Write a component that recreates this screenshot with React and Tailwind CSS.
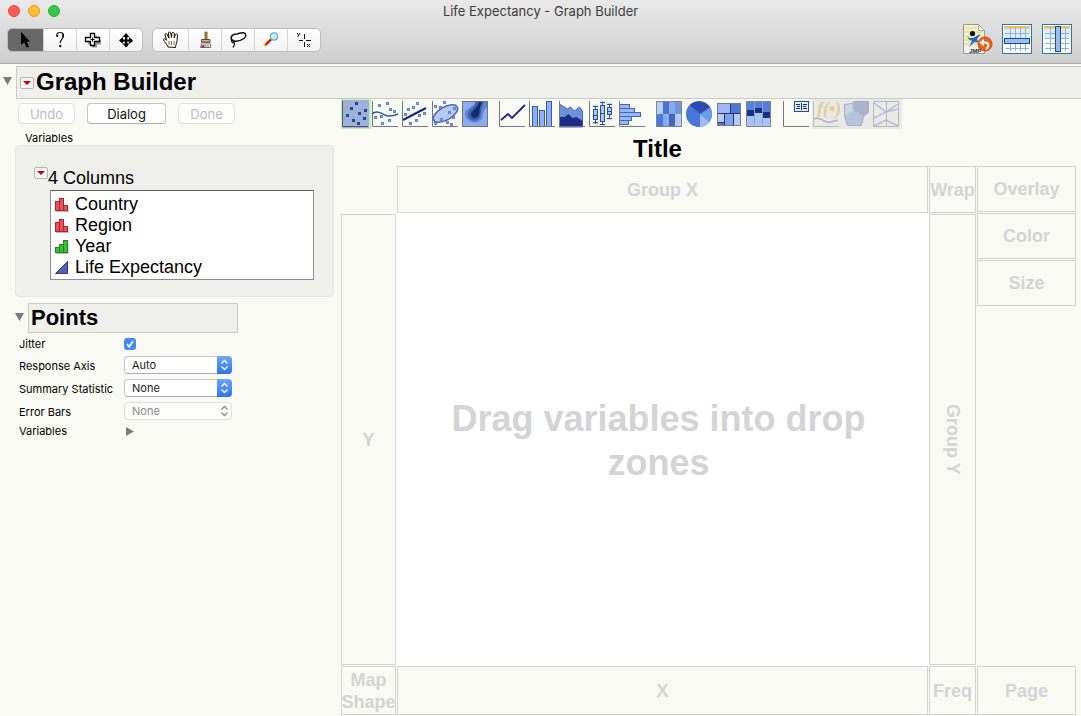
import React from 'react';

const Svg = ({ w = 28, h = 28, children, ...rest }) => (
  <svg width={w} height={h} viewBox={`0 0 ${w} ${h}`} fill="none" aria-hidden="true" className="block shrink-0" {...rest}>
    {children}
  </svg>
);

/* ---------- Window toolbar icons ---------- */

const ArrowIcon = () => (
  <Svg w={20} h={20}>
    <path d="M5 2v13l3.200-2.800 2.200 5h2.600l-2.200-5.600H14z" fill="#000" />
  </Svg>
);
const HelpIcon = () => (
  <Svg w={20} h={20}>
    <path d="M7 6.500c-.8-3 1-4 3-4s3.800 1 3.500 3.500c-.3 2.500-3.300 3.500-3.300 7" stroke="#111" strokeWidth="1.200" />
    <path d="M12.800 3.500v4" stroke="#111" strokeWidth="1.200" />
    <circle cx="7.400" cy="6" r="1" fill="#111" />
    <circle cx="10.200" cy="16" r="1.200" fill="#111" />
  </Svg>
);
const PlusIcon = () => (
  <Svg w={20} h={20}>
    <path d="M9 5.500h5v4h4v5h-4v3h-5v-3h-4v-5h4z" fill="#999" />
    <path d="M7.500 3.500h4v4h5v4h-5v4h-4v-4h-5v-4h5z" fill="#fff" stroke="#000" strokeWidth="1.300" />
    <path d="M7.500 9.500h4M9.500 7.500v4" stroke="#000" />
  </Svg>
);
const MoveIcon = () => (
  <Svg w={20} h={20}>
    <path d="M11 6v11M5 11.500h12" stroke="#aaa" strokeWidth="2" />
    <path d="M10 5v11M4 10.500h12" stroke="#000" strokeWidth="2" />
    <path d="M10 3l3.500 4h-7zM10 17.500l3.500-4h-7zM3 10.500l4-3.500v7zM17 10.500l-4-3.500v7z" fill="#000" />
  </Svg>
);
const HandIcon = () => (
  <Svg w={20} h={20}>
    <path
      d="M7 17c-1-3-4-5-4.500-7.500.5-1.300 2-.8 3 .8L4 4.500c.3-1.300 1.700-1.200 2.200 0L8 8 7.300 3c.4-1.300 2-1.200 2.400 0l.8 4.500.4-4.500c.6-1.100 2-.9 2.300.3l.1 4.700 1-3.500c.8-1 2-.6 2.200.6L16 11c-.2 2.500-1.500 3.500-1.500 6.500z"
      fill="#fffef0"
      stroke="#111"
    />
    <path d="M8 11v4M10.500 11v4M13 11v4" stroke="#777" />
  </Svg>
);
const BrushIcon = () => (
  <Svg w={20} h={20}>
    <path d="M10 2h2v8h-2z" fill="#c98a4a" stroke="#6b4a2a" strokeWidth=".8" />
    <path d="M6.500 9.500h8.500v2.500H6.500z" fill="#e9b274" stroke="#333" strokeWidth=".8" />
    <path d="M7 12.500h8l.8 5H5.500z" fill="#eee" stroke="#555" strokeWidth=".8" />
    <path d="M9 13v4M11 13v4M13 13v4" stroke="#888" />
    <path d="M6 17.500l1.500-3 1.500 1.500 1 1.500z" fill="#c8102e" />
  </Svg>
);
const LassoIcon = () => (
  <Svg w={20} h={20}>
    <path d="M5 11C1 8 4 4 8.500 4c3-.3 4-1.500 7-1.200 3 .5 3 4 .5 5.700-3 2-7 3.300-10.500 2.500z" stroke="#111" strokeWidth="1.500" />
    <path d="M3.500 10.500c1.500-1 3.500.3 2.500 1.800-1 1-2.500 0-2.500-1.800zM5.500 12.500c2 1 .5 3-.5 5" stroke="#111" strokeWidth="1.200" />
  </Svg>
);
const MagnifierIcon = () => (
  <Svg w={20} h={20}>
    <path d="M9.500 9.500l-6.500 6.500" stroke="#f2cf30" strokeWidth="3" />
    <path d="M10 9.500l-5.500 5.500" stroke="#d01020" strokeWidth="2.200" />
    <circle cx="13" cy="6.500" r="3.800" fill="#a9f2fb" stroke="#5b93a8" />
    <path d="M11 6.500l2-2" stroke="#fff" />
  </Svg>
);
const CrosshairIcon = () => (
  <Svg w={20} h={20}>
    <path d="M10.500 4v5M10.500 12v5M5 10.500h4M12 10.500h5" stroke="#111" />
    <path d="M3 3l1.500 2M6 3L3.500 7M13 14l3 3M16 14l-3 3" stroke="#111" />
  </Svg>
);

const JmpIcon = () => (
  <Svg w={32} h={32}>
    <path d="M2.500 1.500h15l6 6v23h-21z" fill="#f6f3c8" stroke="#999" />
    <path d="M17.500 1.500v6h6z" fill="#fff" stroke="#aaa" />
    <path d="M3 5h13M3 9h19M3 13h19M3 17h19M3 21h19" stroke="#d8d48e" />
    <path d="M3 23h20v7H3z" fill="#eee" />
    <circle cx="11.500" cy="10.500" r="2.600" fill="#111" />
    <path d="M6 14c4 1.500 6 1 8 0l5.500-3.500-3.500 6 1.500 3-4-.5-5.500 5L11 18c-2-1-4-2-5-4z" fill="#2468c2" />
    <text x="8" y="30" fontFamily="Liberation Sans, sans-serif" fontSize="6" fontWeight="700" fontStyle="italic" fill="#333">JMP</text>
    <circle cx="24" cy="21" r="7" fill="#e8641c" stroke="#c9500f" />
    <path d="M25 26c3.500-2 3-6.500-1-6.500h-2" stroke="#fff" strokeWidth="2" />
    <path d="M18.500 19.500l4.500-3.800v7.500z" fill="#fff" />
  </Svg>
);
const SheetIcon = ({ column }) => (
  <Svg w={30} h={30}>
    <rect x=".5" y=".5" width="29" height="29" fill="#fff" stroke="#2579b5" />
    <path d="M2 4h26v10H2z" fill="#d9efff" />
    <path d="M2 2h26v2.500H2z" fill="#f8bd4c" />
    <path d="M3 9.500h24M3 14.500h24M3 19.500h24M3 24.500h24M8.500 3v24M13.500 3v24M18.500 3v24M23.500 3v24" stroke="#8fb3d6" />
    {column ? (
      <rect x="13.500" y="2.500" width="5" height="25" fill="#9dbde4" stroke="#1848a0" />
    ) : (
      <rect x="2.500" y="14.500" width="25" height="5" fill="#9dbde4" stroke="#1848a0" />
    )}
  </Svg>
);

/* ---------- Graph element icons ---------- */

const Axes = ({ c = '#777' }) => <path d="M1.500 1v25.500H27" stroke={c} />;
const Dots = ({ pts, fill = '#8faae6', stroke = '#6283cc' }) =>
  pts.map(([x, y]) => <rect key={`${x}-${y}`} x={x + 0.5} y={y + 0.5} width="2" height="2" fill={fill} stroke={stroke} />);

const PointsIcon = () => (
  <Svg>
    <rect x="1" y="0" width="27" height="28" fill="#9fb1d6" />
    <Axes c="#555" />
    <Dots pts={[[14, 2], [9, 7], [23, 9], [17, 12], [5, 14], [22, 17], [11, 19], [16, 22]]} fill="#2453c4" stroke="#1d469f" />
  </Svg>
);
const SmootherIcon = () => (
  <Svg>
    <Axes />
    <Dots pts={[[7, 4], [15, 2], [18, 8], [22, 10], [3, 16], [9, 15], [17, 19], [10, 22]]} />
    <path d="M1 14c4-4 9-1 13 1s8 1 13-1" stroke="#3553a8" strokeWidth="1.400" />
  </Svg>
);
const FitIcon = () => (
  <Svg>
    <Axes />
    <Dots pts={[[15, 2], [6, 8], [11, 6], [3, 13], [17, 14], [22, 12], [14, 19], [8, 22]]} />
    <path d="M2 20L25 8" stroke="#17218f" strokeWidth="2" />
  </Svg>
);
const EllipseIcon = () => (
  <Svg>
    <Axes />
    <Dots pts={[[12, 1], [3, 5], [8, 6], [21, 16], [15, 21], [19, 23], [3, 22]]} />
    <ellipse cx="14.500" cy="13.500" rx="13.500" ry="6.500" transform="rotate(-30 14.500 13.500)" fill="#a9bbee" fillOpacity=".8" stroke="#4a66cf" strokeWidth="1.500" />
    <Dots pts={[[17, 11], [22, 7], [9, 18]]} />
  </Svg>
);
const ContourIcon = () => (
  <Svg>
    <rect x="1.500" y="1.500" width="25" height="25" fill="#8eabee" />
    <path d="M14 2c-1 5-10 6-10 12 1 9 12 11 17 5 2-6 0-8 5-12V2z" fill="#5f85d2" />
    <path d="M15 2c-1 6-8 7-8 13 0 6 9 8 12 2 2-6 0-8 4-15z" fill="#395fae" />
    <path d="M18 2c-2 8-8 8-8 13 1 4 6 4 8 0 1-5 0-7 3-13z" fill="#152c66" />
    <rect x="1.500" y="1.500" width="25" height="25" stroke="#6d7380" />
  </Svg>
);
const LineIcon = () => (
  <Svg>
    <Axes />
    <path d="M3 20l7-6 4 4L27 5" stroke="#1b2693" strokeWidth="1.800" />
  </Svg>
);
const BarsIcon = () => (
  <Svg>
    <g fill="#8eb0f7" stroke="#3358b5">
      <rect x="4.500" y="6.500" width="5" height="20" />
      <rect x="11.500" y="10.500" width="5" height="16" />
      <rect x="18.500" y="1.500" width="5" height="25" />
    </g>
    <Axes />
  </Svg>
);
const AreaIcon = () => (
  <Svg>
    <path d="M1.500 4l8 5 3-2 4 4 5-4 3 4v16h-23z" fill="#6c91db" stroke="#4668b8" />
    <path d="M1.500 17h5l4-3 4 4 4-1 6 4v5h-23z" fill="#1d2c84" />
    <Axes />
  </Svg>
);
const BoxPlotIcon = () => (
  <Svg>
    <path d="M5 5h5v2H5zM5 22h5v2H5zM12 1h5v2h-5zM12 24h5v2h-5zM19 3h5v2h-5zM19 18h5v2h-5z" fill="#ddd" stroke="#ddd" />
    <g stroke="#2b4f9f">
      <path d="M7.500 6v18M5 6.500h5M5 22.500h5M14.500 2v23M12 2.500h5M12 24.500h5M21.500 4v14M19 4.500h5M19 18.500h5" />
      <rect x="5.500" y="9.500" width="4" height="10" fill="#a9c6fb" />
      <rect x="12.500" y="5.500" width="4" height="16" fill="#a9c6fb" />
      <rect x="19.500" y="7.500" width="4" height="7" fill="#a9c6fb" />
      <path d="M5 15.500h5M12 13.500h5M19 11.500h5" />
    </g>
    <Axes />
  </Svg>
);
const HistogramIcon = () => (
  <Svg>
    <g fill="#9ab7f5" stroke="#4064bb">
      <rect x="1.500" y="4.500" width="10" height="4" />
      <rect x="1.500" y="8.500" width="15" height="4" />
      <rect x="1.500" y="12.500" width="21" height="4" />
      <rect x="1.500" y="16.500" width="12" height="4" />
      <rect x="1.500" y="20.500" width="9" height="4" />
    </g>
    <Axes />
  </Svg>
);
const HeatmapIcon = () => (
  <Svg>
    <path d="M2 2h6v12H2z" fill="#b7cdfa" /><path d="M8 2h6v12H8z" fill="#4673d6" />
    <path d="M14 2h6v12h-6z" fill="#8aa9ea" /><path d="M20 2h6v12h-6z" fill="#7396de" />
    <path d="M2 14h6v12H2z" fill="#4a78dc" /><path d="M8 14h6v12H8z" fill="#8aabef" />
    <path d="M14 14h6v12h-6z" fill="#4565ba" /><path d="M20 14h6v12h-6z" fill="#b5ccfc" />
    <rect x="1.500" y="1.500" width="25" height="25" stroke="#7e838d" />
  </Svg>
);
const PieIcon = () => (
  <Svg>
    <circle cx="14" cy="14" r="13" fill="#4876d8" />
    <path d="M15 14L5 5A13 13 0 0 1 25 7.500z" fill="#2d4ab0" />
    <path d="M15 14L25 7.500A13 13 0 0 1 24 22z" fill="#6b9be5" />
    <path d="M15 14l9 8a13 13 0 0 1-9 5z" fill="#9ebcfb" />
  </Svg>
);
const TreemapIcon = () => (
  <Svg>
    <rect x="2.500" y="3.500" width="23" height="22" fill="#303645" />
    <path d="M3 4h12v9H3z" fill="#9db8f4" /><path d="M16 4h9v9h-9z" fill="#4c78dc" />
    <path d="M3 14h6v8H3z" fill="#b5cbfb" /><path d="M3 23h6v2H3z" fill="#4c78dc" />
    <path d="M10 14h8v11h-8z" fill="#7da0fa" /><path d="M19 14h6v11h-6z" fill="#b5cbfb" />
    <rect x="2.500" y="3.500" width="23" height="22" stroke="#777c86" />
  </Svg>
);
const MosaicIcon = () => (
  <Svg>
    <path d="M2 2h7v24H2zM10 2h7v24h-7zM18 2h7v24h-7z" fill="#a9c4fb" />
    <path d="M2 2h7v8H2zM10 2h7v6h-7zM18 2h7v10h-7z" fill="#5681dc" />
    <path d="M2 10h7v6H2zM10 8h7v5h-7zM18 12h7v6h-7z" fill="#183185" />
    <path d="M9.500 2v24M17.500 2v24" stroke="#9aa0ac" />
    <rect x="1.500" y="1.500" width="24" height="25" stroke="#7e8490" />
  </Svg>
);
const CaptionIcon = () => (
  <Svg>
    <Axes />
    <rect x="12.500" y="1.500" width="14" height="10" fill="#e5efff" stroke="#2246bd" />
    <path d="M14 4.500h4M21 4.500h4M14 8.500h4M21 8.500h4M15 6.500h3M21 6.500h3M19.500 3v7" stroke="#1a286b" />
  </Svg>
);
const FormulaIcon = () => (
  <Svg>
    <Axes c="#bdbdbd" />
    <text x="5" y="15" fontFamily="Liberation Serif, serif" fontSize="18" fontStyle="italic" fontWeight="700" fill="#ddd09a">f(•)</text>
    <path d="M2 19c5-3 8 2 13 3 4 1 6-1 11-2" stroke="#a9b3d3" strokeWidth="1.400" />
  </Svg>
);
const MapIcon = () => (
  <Svg>
    <path d="M2.500 4.500l7-1 2-2h15v11l-5 4-2 9h-14l-3-9z" fill="#b8c3de" stroke="#a9afbd" />
    <path d="M3 5l7-1 1 7-8 5z" fill="#cbd4e8" />
    <path d="M12 2h14v10l-5 4-9-5z" fill="#a9b3cb" />
    <path d="M11.500 3v8l9 5M3 16l8-5" stroke="#bbc0cc" />
  </Svg>
);
const ParallelIcon = () => (
  <Svg>
    <path d="M2 3l12 9 12-8M2 18l12-6 12-3M2 26l12-6 12 6" stroke="#b2bddc" strokeWidth="1.500" />
    <path d="M1.500 1.500h25v25h-25zM14.500 2v24" stroke="#b9b9b9" />
  </Svg>
);

const elementGroups = [
  [['Points', PointsIcon], ['Smoother', SmootherIcon], ['Line of Fit', FitIcon], ['Ellipse', EllipseIcon], ['Contour', ContourIcon]],
  [['Line', LineIcon], ['Bar', BarsIcon], ['Area', AreaIcon], ['Box Plot', BoxPlotIcon], ['Histogram', HistogramIcon]],
  [['Heatmap', HeatmapIcon], ['Pie', PieIcon], ['Treemap', TreemapIcon], ['Mosaic', MosaicIcon]],
  [['Caption Box', CaptionIcon], ['Formula', FormulaIcon, true], ['Map Shapes', MapIcon, true], ['Parallel', ParallelIcon, true]],
];

/* ---------- Column type icons ---------- */

const NominalIcon = () => (
  <Svg w={15} h={15}>
    <path d="M2 14.500h13v-5" stroke="#bbb" />
    <g fill="#e0555c" stroke="#b5202b">
      <rect x="1.500" y="4.500" width="4" height="9" /><rect x="5.500" y="1.500" width="4" height="12" /><rect x="9.500" y="8.500" width="4" height="5" />
    </g>
  </Svg>
);
const OrdinalIcon = () => (
  <Svg w={15} h={15}>
    <path d="M2 14.500h13v-12" stroke="#bbb" />
    <g fill="#3fbe35" stroke="#1f8a1c">
      <rect x="1.500" y="8.500" width="4" height="5" /><rect x="5.500" y="5.500" width="4" height="8" /><rect x="9.500" y="1.500" width="4" height="12" />
    </g>
  </Svg>
);
const ContinuousIcon = () => (
  <Svg w={15} h={15}>
    <path d="M1.500 13.500l12-12v12z" fill="#5560b8" stroke="#2b3486" />
  </Svg>
);
const columns = [['Country', NominalIcon], ['Region', NominalIcon], ['Year', OrdinalIcon], ['Life Expectancy', ContinuousIcon]];

/* ---------- Shared pieces ---------- */

const RedMenu = ({ label }) => (
  <button aria-label={label} className="flex h-3 w-[14px] shrink-0 items-center justify-center rounded-xs border border-[#b4b4b4] bg-[#f4f4f2]">
    <Svg w={8} h={4}><path d="M0 0h8L4 4z" fill="#c8000f" /></Svg>
  </button>
);
const Disclosure = ({ label }) => (
  <button aria-label={label} className="shrink-0 pb-[3px]">
    <Svg w={9} h={8}><path d="M0 0h9L4.500 8z" fill="#7c7c7c" /></Svg>
  </button>
);
const ToolGroup = ({ tools }) => (
  <div className="flex overflow-hidden rounded-[5px] border border-[#bdbdbd] bg-linear-to-b from-white to-[#f3f3f3]">
    {tools.map(([label, Icon, active], i) => (
      <button
        key={label}
        aria-label={label}
        className={`flex h-[22px] items-center justify-center ${i ? 'w-[33px] border-l border-[#d4d4d4]' : 'w-[35px]'} ${active ? 'bg-[#686868]' : ''}`}
      >
        <Icon />
      </button>
    ))}
  </div>
);
const PushButton = ({ children, disabled, className }) => (
  <button
    disabled={disabled}
    className={`h-[21px] rounded-[4px] border text-[13px] leading-[18px] ${disabled ? 'border-[#dededa] bg-[#fdfdfb] text-[#bdbdbb]' : 'border-[#c4c4c4] border-b-[#adadad] bg-white text-[#111]'} ${className}`}
  >
    {children}
  </button>
);
const FieldLabel = ({ htmlFor, children }) => (
  <label htmlFor={htmlFor} className="pt-px">{children}</label>
);
const Popup = ({ id, value, disabled }) => (
  <div className="relative mb-0.5 w-[108px]">
    <select
      id={id}
      disabled={disabled}
      defaultValue={value}
      className={`block h-[18px] w-full appearance-none rounded-[4px] border pl-[7px] text-[11px] leading-4 opacity-100 ${disabled ? 'border-[#dededa] bg-[#fcfcfa] text-[#8b8b8b]' : 'border-[#c6c6c6] border-b-[#adadad] bg-white text-[#1c1c1c]'}`}
    >
      <option>{value}</option>
    </select>
    <span className={`pointer-events-none absolute inset-y-0 right-0 flex w-[15px] items-center justify-center rounded-r-[4px] ${disabled ? 'text-[#8b8b8b]' : 'bg-linear-to-b from-[#6aabfb] to-[#2f6ff0] text-white'}`}>
      <Svg w={9} h={12}><path d="M1.500 4.500l3-3 3 3M1.500 7.500l3 3 3-3" stroke="currentColor" strokeWidth="1.300" /></Svg>
    </span>
  </div>
);
const Zone = ({ children, className = '' }) => (
  <div className={`flex items-center justify-center border border-[#d4d4d2] text-center text-[18px] leading-[22px] font-bold text-[#d4d4d4] ${className}`}>
    {children}
  </div>
);

export default function App() {
  return (
    <div className="flex min-h-screen flex-col bg-[#fafaf5] font-['Inter',sans-serif] text-black">
      <header className="border-b border-[#a9a9a9] bg-linear-to-b from-[#e9e9e9] to-[#cfcfcf]">
        <div className="grid h-[21px] grid-cols-[1fr_auto_1fr] items-center px-2">
          <div className="flex gap-2">
            <button aria-label="Close" className="size-3 rounded-full border border-[#e0443e] bg-[#fc5b57]" />
            <button aria-label="Minimize" className="size-3 rounded-full border border-[#dfa023] bg-[#fdbe34]" />
            <button aria-label="Zoom" className="size-3 rounded-full border border-[#27aa35] bg-[#34c84a]" />
          </div>
          <h1 className="text-[13px] leading-5 text-[#3c3c3c]">Life Expectancy - Graph Builder</h1>
        </div>
        <div className="flex h-[42px] items-start gap-[9px] pt-[7px] pr-[9px] pl-[7px]">
          <ToolGroup tools={[['Arrow', ArrowIcon, true], ['Help', HelpIcon], ['Selection', PlusIcon], ['Scroller', MoveIcon]]} />
          <ToolGroup tools={[['Grabber', HandIcon], ['Brush', BrushIcon], ['Lasso', LassoIcon], ['Magnifier', MagnifierIcon], ['Crosshairs', CrosshairIcon]]} />
          <div className="-mt-1 ml-auto flex items-start gap-[10px]">
            <button aria-label="Journal" className="-mt-px w-[31px]"><JmpIcon /></button>
            <button aria-label="Rows"><SheetIcon /></button>
            <button aria-label="Columns"><SheetIcon column /></button>
          </div>
        </div>
      </header>

      <div className="flex items-center gap-1 pt-0.5 pl-[3px]">
        <Disclosure label="Collapse Graph Builder" />
        <div className="flex h-[33px] flex-1 items-center gap-0.5 border border-r-0 border-[#c9ccc3] bg-[#efefec] pl-[3px]">
          <RedMenu label="Graph Builder options" />
          <h2 className="pb-0.5 font-['Liberation_Sans',sans-serif] text-2xl leading-7 font-bold">Graph Builder</h2>
        </div>
      </div>

      <main className="flex flex-1">
        <aside className="w-[341px] shrink-0 pt-1 pr-[7px] pl-[15px]">
          <div className="flex gap-3 pl-[3px]">
            <PushButton disabled className="w-[57px]">Undo</PushButton>
            <PushButton className="w-[79px]">Dialog</PushButton>
            <PushButton disabled className="w-[57px]">Done</PushButton>
          </div>
          <h3 className="mt-2 pl-[10px] text-[11px] leading-[13px]">Variables</h3>
          <section className="h-[152px] rounded-[4px] border border-[#e6e6e2] bg-[#efefec] pt-[21px] pr-[19px] pl-[18px] font-['Liberation_Sans',sans-serif] text-[18px] leading-[21px]">
            <div className="flex items-start">
              <RedMenu label="Column options" />
              <span className="pt-px pb-px">4 Columns</span>
            </div>
            <ul className="ml-4 border border-[#8d8d8d] border-t-[#5e5e5e] bg-white pt-[3px] pb-px pl-[3px]">
              {columns.map(([name, Icon]) => (
                <li key={name} className="flex items-center gap-[6px]"><Icon />{name}</li>
              ))}
            </ul>
          </section>

          <div className="mt-1.5 flex items-center gap-1">
            <Disclosure label="Collapse Points" />
            <h2 className="w-[210px] border border-[#c9ccc3] bg-[#efefec] pl-0.5 font-['Liberation_Sans',sans-serif] text-[22px] leading-7 font-bold">Points</h2>
          </div>
          <div className="grid grid-cols-[105px_auto] grid-rows-[21px_23px_23px_23px_17px] items-center justify-start pl-1 text-[11px] leading-[15px]">
            <FieldLabel htmlFor="jitter">Jitter</FieldLabel>
            <div className="relative size-3">
              <input id="jitter" type="checkbox" defaultChecked className="block size-3 appearance-none rounded-[3px] bg-[#3f8cf6]" />
              <span className="pointer-events-none absolute inset-0">
                <Svg w={12} h={12}><path d="M3 6l2.200 2.800L9 3" stroke="#fff" strokeWidth="1.600" /></Svg>
              </span>
            </div>
            <FieldLabel htmlFor="axis">Response Axis</FieldLabel>
            <Popup id="axis" value="Auto" />
            <FieldLabel htmlFor="stat">Summary Statistic</FieldLabel>
            <Popup id="stat" value="None" />
            <FieldLabel htmlFor="bars">Error Bars</FieldLabel>
            <Popup id="bars" value="None" disabled />
            <span>Variables</span>
            <button aria-label="Expand Variables" className="ml-0.5 justify-self-start">
              <Svg w={8} h={9}><path d="M0 0v9l8-4.500z" fill="#7c7c7c" /></Svg>
            </button>
          </div>
        </aside>

        <section className="flex min-w-0 flex-1 flex-col pr-[5px] pb-px font-['Liberation_Sans',sans-serif]">
          <div className="flex gap-[7px]">
            {elementGroups.map((group) => (
              <div key={group[0][0]} className="flex">
                {group.map(([label, Icon, disabled]) => (
                  <button
                    key={label}
                    aria-label={label}
                    disabled={disabled}
                    className={`flex size-[30px] items-center justify-start ${disabled ? 'bg-[#e9e9e5]' : ''} ${label === 'Points' ? 'bg-[#c5f0b5]' : ''}`}
                  >
                    <Icon />
                  </button>
                ))}
              </div>
            ))}
          </div>
          <h2 className="pt-[5px] pr-[102px] pb-0.5 text-center text-2xl leading-[30px] font-bold">Title</h2>
          <div className="grid flex-1 grid-cols-[55px_minmax(0,1fr)_47px_99px] grid-rows-[47px_minmax(0,1fr)_49px] gap-px">
            <Zone className="col-start-2">Group X</Zone>
            <Zone>Wrap</Zone>
            <div className="row-span-2 flex flex-col gap-px">
              <Zone className="h-[46px]">Overlay</Zone>
              <Zone className="h-[46px]">Color</Zone>
              <Zone className="h-[46px]">Size</Zone>
            </div>
            <Zone className="row-start-2">Y</Zone>
            <div className="row-start-2 -m-px flex items-center justify-center bg-white pt-0.5 pr-12 pl-10 text-center text-4xl leading-[44px] font-bold text-[#d4d4d4]">
              Drag variables into drop zones
            </div>
            <Zone className="row-start-2"><span className="[writing-mode:vertical-rl]">Group Y</span></Zone>
            <Zone className="row-start-3">Map Shape</Zone>
            <Zone className="row-start-3">X</Zone>
            <Zone className="row-start-3">Freq</Zone>
            <Zone className="row-start-3">Page</Zone>
          </div>
        </section>
      </main>
    </div>
  );
}
